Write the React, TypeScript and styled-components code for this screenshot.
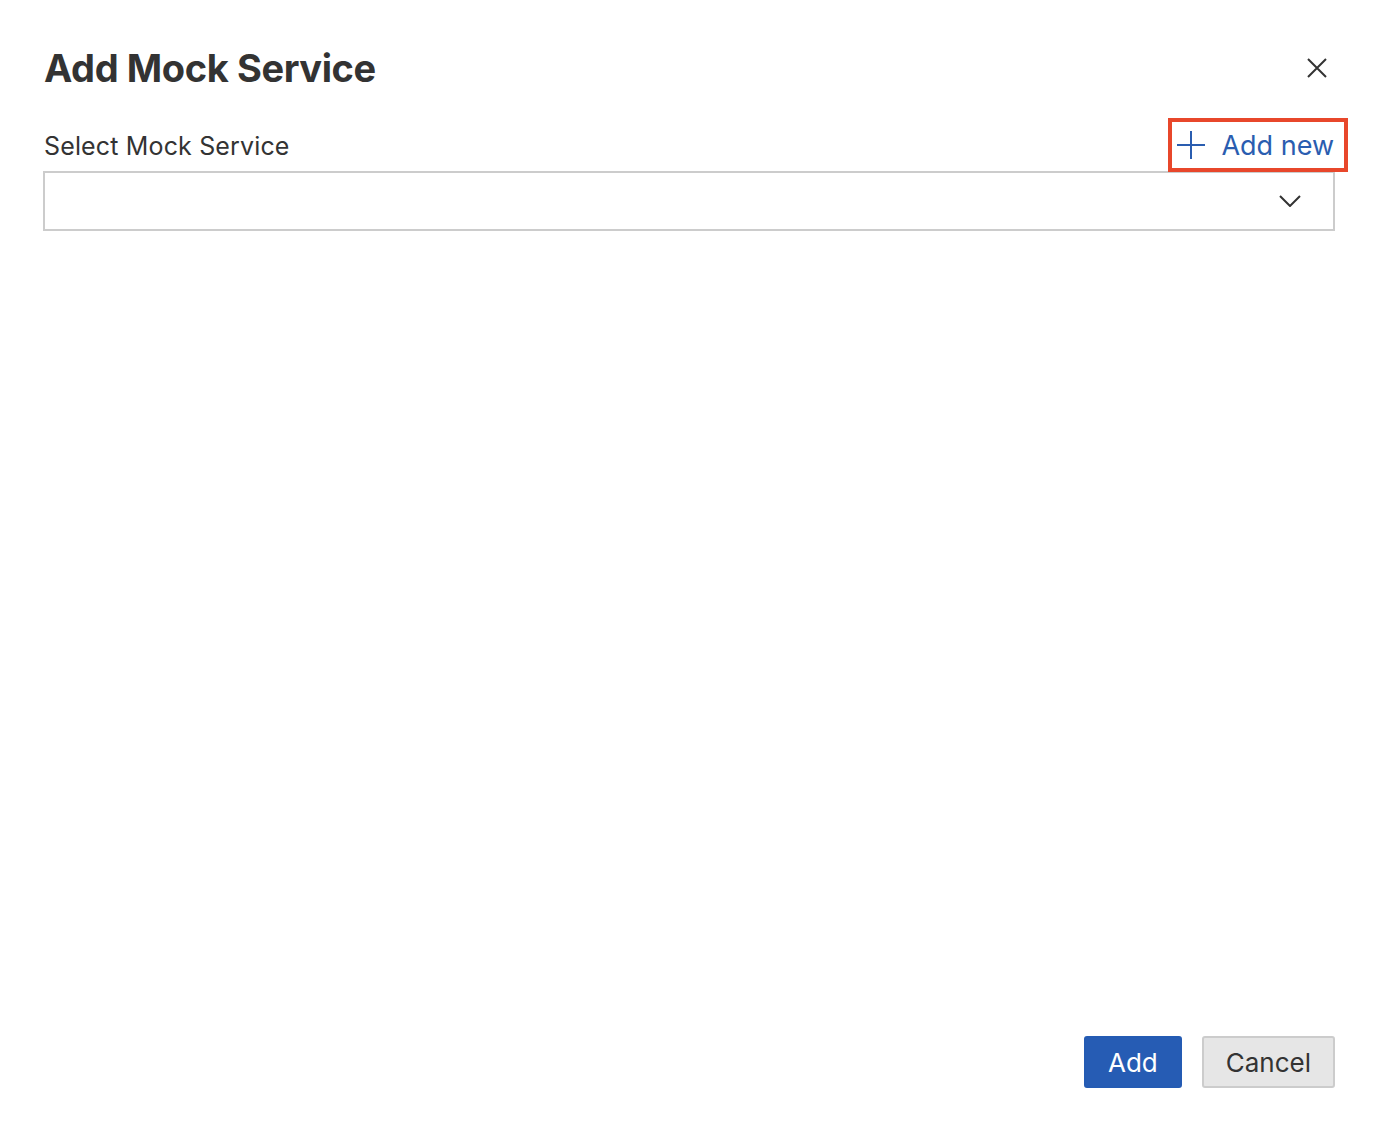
import React from "react";
import styled, { createGlobalStyle } from "styled-components";

const Global = createGlobalStyle`
  html, body { margin: 0; padding: 0; background: #ffffff; }
  body { font-family: Inter, "Liberation Sans", Arial, sans-serif; color: #333333; }
  * { box-sizing: border-box; }
`;

const Dialog = styled.div`
  width: 1376px;
  height: 1128px;
  display: flex;
  flex-direction: column;
  padding: 40px 41px 40px 43px;
  background: #ffffff;
`;

const Header = styled.div`
  display: flex;
  align-items: center;
  justify-content: space-between;
  height: 56px;
`;

const Title = styled.h1`
  margin: 0;
  font-size: 38px;
  font-weight: 700;
  letter-spacing: -0.4px;
  color: #333333;
  padding-left: 1px;
`;

const CloseButton = styled.button`
  border: none;
  background: transparent;
  padding: 0;
  width: 20px;
  height: 20px;
  margin-right: 8px;
  display: flex;
  align-items: center;
  justify-content: center;
  cursor: pointer;
`;

const Body = styled.div`
  flex: 1;
  display: flex;
  flex-direction: column;
  padding-top: 22px;
`;

const FieldHeader = styled.div`
  display: flex;
  align-items: flex-end;
  justify-content: space-between;
  margin-right: -13px;
`;

const Label = styled.label`
  font-size: 25px;
  letter-spacing: 0.15px;
  color: #333333;
  padding-left: 1px;
  padding-bottom: 10px;
`;

const AddNew = styled.button`
  display: flex;
  align-items: center;
  gap: 16px;
  height: 54px;
  padding: 0 10px 0 5px;
  border: 4px solid #e8472b;
  background: #ffffff;
  color: #2a5db0;
  font-family: inherit;
  font-size: 27px;
  cursor: pointer;
  margin-bottom: -1px;
  position: relative;
  z-index: 1;
`;

const SelectBox = styled.div`
  height: 60px;
  border: 2px solid #cccccc;
  display: flex;
  align-items: center;
  justify-content: flex-end;
  padding-right: 32px;
`;

const Footer = styled.div`
  display: flex;
  justify-content: flex-end;
  gap: 20px;
`;

const Button = styled.button<{ $primary?: boolean }>`
  height: 52px;
  padding: 0 22px;
  border-radius: 3px;
  font-family: inherit;
  font-size: 26px;
  cursor: pointer;
  border: 2px solid ${(p) => (p.$primary ? "#245bb3" : "#cccccc")};
  background: ${(p) => (p.$primary ? "#265cb4" : "#e6e6e6")};
  color: ${(p) => (p.$primary ? "#ffffff" : "#333333")};
`;

export default function App() {
  return (
    <>
      <Global />
      <Dialog>
        <Header>
          <Title>Add Mock Service</Title>
          <CloseButton aria-label="Close">
            <svg width="20" height="20" viewBox="0 0 20 20">
              <path d="M1 1L19 19M19 1L1 19" stroke="#333" strokeWidth="2" fill="none" />
            </svg>
          </CloseButton>
        </Header>
        <Body>
          <FieldHeader>
            <Label>Select Mock Service</Label>
            <AddNew>
              <svg width="28" height="28" viewBox="0 0 28 28">
                <path d="M14 0V28M0 14H28" stroke="#2a5db0" strokeWidth="2" fill="none" />
              </svg>
              Add new
            </AddNew>
          </FieldHeader>
          <SelectBox>
            <svg width="22" height="12" viewBox="0 0 22 12">
              <path d="M1 1L11 11L21 1" stroke="#333" strokeWidth="2" fill="none" />
            </svg>
          </SelectBox>
        </Body>
        <Footer>
          <Button $primary>Add</Button>
          <Button>Cancel</Button>
        </Footer>
      </Dialog>
    </>
  );
}
